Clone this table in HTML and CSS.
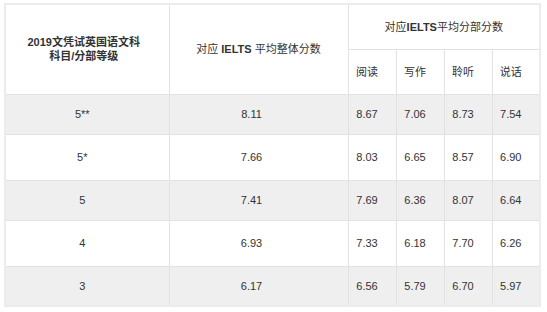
FILE: index.html
```html
<!DOCTYPE html>
<html lang="zh-CN">

<head>
    <meta charset="UTF-8">
    <meta name="viewport" content="width=device-width, initial-scale=1.0">
    <title>文凭试英国语文科与 IELTS 对照</title>
    <link rel="stylesheet" href="styles.css">
</head>

<body>
    <table class="score-table">
        <colgroup>
            <col class="col-grade">
            <col class="col-overall">
            <col class="col-part">
            <col class="col-part">
            <col class="col-part">
            <col class="col-part">
        </colgroup>
        <thead>
            <tr class="head-top">
                <th rowspan="2" class="grade-head">2019文凭试英国语文科<br>科目/分部等级</th>
                <th rowspan="2" class="overall-head">对应 <b>IELTS</b> 平均整体分数</th>
                <th colspan="4" class="part-head">对应<b>IELTS</b>平均分部分数</th>
            </tr>
            <tr class="head-sub">
                <th>阅读</th>
                <th>写作</th>
                <th>聆听</th>
                <th>说话</th>
            </tr>
        </thead>
        <tbody>
            <tr class="row-short">
                <td class="grade">5**</td>
                <td class="overall">8.11</td>
                <td>8.67</td>
                <td>7.06</td>
                <td>8.73</td>
                <td>7.54</td>
            </tr>
            <tr class="row-tall">
                <td class="grade">5*</td>
                <td class="overall">7.66</td>
                <td>8.03</td>
                <td>6.65</td>
                <td>8.57</td>
                <td>6.90</td>
            </tr>
            <tr class="row-short">
                <td class="grade">5</td>
                <td class="overall">7.41</td>
                <td>7.69</td>
                <td>6.36</td>
                <td>8.07</td>
                <td>6.64</td>
            </tr>
            <tr class="row-tall">
                <td class="grade">4</td>
                <td class="overall">6.93</td>
                <td>7.33</td>
                <td>6.18</td>
                <td>7.70</td>
                <td>6.26</td>
            </tr>
            <tr class="row-short">
                <td class="grade">3</td>
                <td class="overall">6.17</td>
                <td>6.56</td>
                <td>5.79</td>
                <td>6.70</td>
                <td>5.97</td>
            </tr>
        </tbody>
    </table>
</body>
</html>
```

FILE: styles.css
```css
body {
    margin: 0;
    padding: 3px 0 0 4px;
    background-color: #fff;
    font-family: 'Liberation Sans', 'Noto Sans CJK SC', sans-serif;
    color: #333;
}

.score-table {
    border-collapse: collapse;
    table-layout: fixed;
    width: 536px;
    border: 2px solid #ececec;
    font-size: 11px;
}

.col-grade {
    width: 164px;
}

.col-overall {
    width: 179px;
}

.col-part {
    width: 48px;
}

.score-table th,
.score-table td {
    border: 1px solid #e2e2e2;
    padding: 0 10px 0 0;
    text-align: center;
    vertical-align: middle;
}

.score-table th {
    font-weight: normal;
    line-height: 14px;
}

.score-table th b {
    font-weight: bold;
}

.score-table th.grade-head {
    font-weight: bold;
    padding-right: 7px;
}

.score-table th.overall-head,
.score-table th.part-head {
    padding-right: 0;
}

.head-top {
    height: 45px;
}

.head-sub {
    height: 45px;
}

.score-table td.overall {
    padding-right: 14px;
}

.row-short {
    height: 40px;
    background-color: #efefef;
}

.row-tall {
    height: 46px;
    background-color: #fff;
}
```
